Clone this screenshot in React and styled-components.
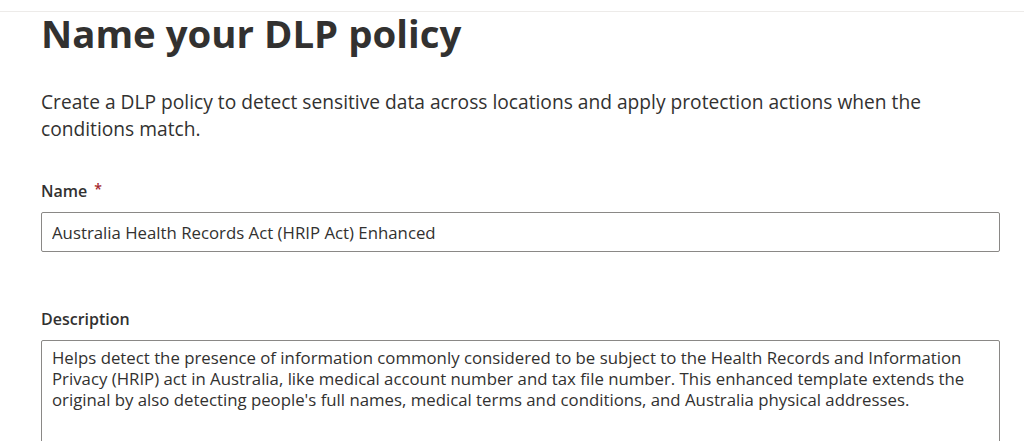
import React from 'react';
import styled, { createGlobalStyle } from 'styled-components';

const GlobalStyle = createGlobalStyle`
  html, body {
    margin: 0;
    background: #ffffff;
  }
  body {
    font-family: 'Open Sans', 'Noto Sans', sans-serif;
    color: #323130;
  }
`;

function App() {
  return (
    <StyledPage>
      <GlobalStyle />
      <StyledPanel>
        <StyledTitle>Name your DLP policy</StyledTitle>
        <StyledIntro>
          Create a DLP policy to detect sensitive data across locations and apply protection actions
          when the conditions match.
        </StyledIntro>

        <StyledField $gap={37.6}>
          <StyledLabel htmlFor="policy-name">
            Name
            <StyledRequired>*</StyledRequired>
          </StyledLabel>
          <StyledInput
            id="policy-name"
            type="text"
            defaultValue="Australia Health Records Act (HRIP Act) Enhanced"
          />
        </StyledField>

        <StyledField $gap={56}>
          <StyledLabel htmlFor="policy-desc">Description</StyledLabel>
          <StyledTextArea
            id="policy-desc"
            defaultValue="Helps detect the presence of information commonly considered to be subject to the Health Records and Information Privacy (HRIP) act in Australia, like medical account number and tax file number. This enhanced template extends the original by also detecting people's full names, medical terms and conditions, and Australia physical addresses."
          />
        </StyledField>
      </StyledPanel>
    </StyledPage>
  );
}

const StyledPage = styled.div`
  padding-top: 11px;
  height: 441px;
  box-sizing: border-box;
  overflow: hidden;
`;

const StyledPanel = styled.div`
  border-top: 1px solid #edebe9;
  padding: 0 24px 0 41px;
`;

const StyledTitle = styled.h1`
  margin: 2px 0 0;
  font-size: 38.4px;
  line-height: 1;
  font-weight: 700;
  color: #323130;
`;

const StyledIntro = styled.p`
  margin: 36px 0 0;
  font-size: 19.2px;
  line-height: 27px;
  font-weight: 400;
  color: #323130;
`;

const StyledField = styled.div`
  display: flex;
  flex-direction: column;
  gap: 10px;
  margin-top: ${(p) => p.$gap}px;
`;

const StyledLabel = styled.label`
  display: flex;
  align-items: flex-start;
  font-size: 16px;
  line-height: 22px;
  font-weight: 600;
  color: #323130;
`;

const StyledRequired = styled.span`
  margin-left: 7px;
  font-size: 14px;
  line-height: 18px;
  color: #a4262c;
`;

const StyledInput = styled.input`
  box-sizing: border-box;
  width: 100%;
  height: 40px;
  margin: 0;
  padding: 0 10px;
  border: 1px solid #8a8886;
  border-radius: 2px;
  font-family: 'Open Sans', 'Noto Sans', sans-serif;
  font-size: 16.8px;
  color: #323130;
  background: #ffffff;
  outline: none;
`;

const StyledTextArea = styled.textarea`
  box-sizing: border-box;
  width: 100%;
  height: 130px;
  margin: 0;
  padding: 6px 8px 6px 10px;
  border: 1px solid #8a8886;
  border-radius: 2px;
  font-family: 'Open Sans', 'Noto Sans', sans-serif;
  font-size: 16.8px;
  line-height: 21px;
  color: #323130;
  background: #ffffff;
  resize: none;
  overflow: hidden;
  outline: none;
`;

export default App;
